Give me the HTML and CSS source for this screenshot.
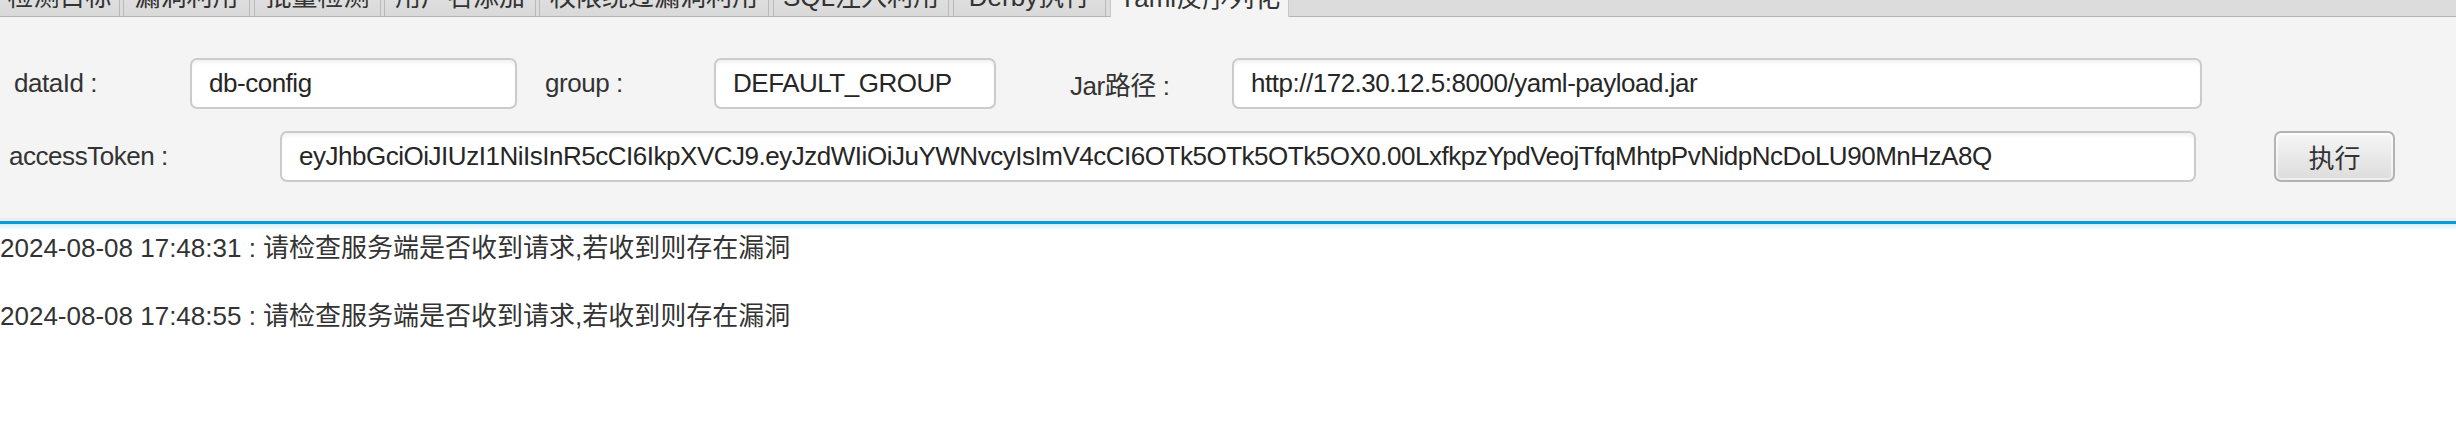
FILE: index.html
```html
<!DOCTYPE html>
<html lang="zh">
<head>
<meta charset="utf-8">
<title>Yaml反序列化</title>
<link rel="stylesheet" href="styles.css">
</head>
<body>
<div class="window">
  <div class="tabbar">
    <div class="tab t1">检测目标</div>
    <div class="tab t2">漏洞利用</div>
    <div class="tab t3">批量检测</div>
    <div class="tab t4">用户名添加</div>
    <div class="tab t5">权限绕过漏洞利用</div>
    <div class="tab t6">SQL注入利用</div>
    <div class="tab t7">Derby执行</div>
    <div class="tab t8 active">Yaml反序列化</div>
  </div>
  <div class="panel">
    <div class="row row1">
      <label class="lbl l-dataid">dataId :</label>
      <div class="field f-dataid">db-config</div>
      <label class="lbl l-group">group :</label>
      <div class="field f-group">DEFAULT_GROUP</div>
      <label class="lbl l-jar">Jar路径 :</label>
      <div class="field f-jar">http://172.30.12.5:8000/yaml-payload.jar</div>
    </div>
    <div class="row row2">
      <label class="lbl l-token">accessToken :</label>
      <div class="field f-token">eyJhbGciOiJIUzI1NiIsInR5cCI6IkpXVCJ9.eyJzdWIiOiJuYWNvcyIsImV4cCI6OTk5OTk5OTk5OX0.00LxfkpzYpdVeojTfqMhtpPvNidpNcDoLU90MnHzA8Q</div>
      <button class="btn">执行</button>
    </div>
  </div>
  <div class="log">
    <div class="line">2024-08-08 17:48:31 : 请检查服务端是否收到请求,若收到则存在漏洞</div>
    <div class="line blank">&nbsp;</div>
    <div class="line">2024-08-08 17:48:55 : 请检查服务端是否收到请求,若收到则存在漏洞</div>
  </div>
</div>
</body>
</html>
```
FILE: styles.css
```css
html, body {
  margin: 0;
  padding: 0;
  background: #ffffff;
}
body {
  width: 2456px;
  height: 444px;
  overflow: hidden;
  font-family: "Liberation Sans", "Noto Sans CJK SC", sans-serif;
  font-size: 26px;
  color: #333333;
}
.window {
  display: flex;
  flex-direction: column;
}

/* tabs */
.tabbar {
  display: flex;
  gap: 3px;
  height: 33px;
  margin-top: -17px;
  background: #dcdcdc;
  border-bottom: 1px solid #b4b4b4;
}
.tab {
  box-sizing: border-box;
  display: flex;
  align-items: center;
  justify-content: center;
  padding-bottom: 10px;
  white-space: nowrap;
  overflow: hidden;
  background: linear-gradient(#e4e4e4, #d9d9d9);
  border-left: 1px solid #b9b9b9;
  border-right: 1px solid #b9b9b9;
  color: #333;
}
.t1 { width: 120px; border-left: none; }
.t2 { width: 127px; }
.t3 { width: 127px; margin-left: 1px; }
.t4 { width: 152px; }
.t5 { width: 230px; }
.t6 { width: 176px; margin-left: 1px; }
.t7 { width: 153px; margin-left: 1px; }
.t8 { width: 179px; margin-left: 1px; }
.tab.active {
  background: #f4f4f4;
  border-color: #c8c8c8;
  height: 34px;
  margin-bottom: -1px;
}

/* form panel */
.panel {
  background: #f4f4f4;
  padding: 41px 0 36px 0;
  display: flex;
  flex-direction: column;
  gap: 22px;
  border-bottom: 3px solid #ebebeb;
}
.row {
  display: flex;
  align-items: center;
  height: 51px;
}
.row1 { padding-left: 14px; }
.row2 { padding-left: 9px; }
.lbl {
  white-space: nowrap;
  color: #333;
  letter-spacing: -0.45px;
}
.l-dataid { width: 176px; }
.l-group { width: 169px; margin-left: 28px; }
.l-jar { width: 162px; margin-left: 74px; }
.l-token { width: 271px; }

.field {
  box-sizing: border-box;
  height: 51px;
  display: flex;
  align-items: center;
  padding-left: 17px;
  background: #ffffff;
  border: 2px solid #cbcbcb;
  border-radius: 7px;
  box-shadow: inset 0 4px 4px -2px rgba(0,0,0,0.07);
  color: #262626;
  white-space: nowrap;
  overflow: hidden;
  letter-spacing: -0.48px;
}
.f-dataid { width: 327px; }
.f-group { width: 282px; }
.f-jar { width: 970px; }
.f-token { width: 1916px; }

.btn {
  box-sizing: border-box;
  width: 121px;
  height: 51px;
  margin-left: 78px;
  font-family: "Noto Sans CJK SC", "Liberation Sans", sans-serif;
  font-size: 26px;
  color: #333;
  border: 2px solid #b3b3b3;
  border-radius: 7px;
  background: linear-gradient(#f6f6f6, #dcdcdc);
  box-shadow: inset 0 0 0 2px rgba(255,255,255,0.55);
  padding: 0;
}

/* log area */
.log {
  border-top: 3px solid #0b9cd8;
  background: linear-gradient(#d3eef8 0px, #ffffff 6px);
  padding-top: 7px;
  flex: 1;
}
.line {
  height: 34px;
  line-height: 34px;
  white-space: nowrap;
  color: #333;
}
```
